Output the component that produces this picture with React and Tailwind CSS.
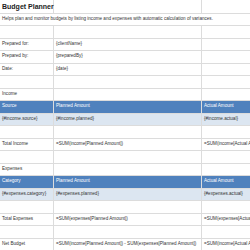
import React from "react";

// rows of the planner sheet: [label, planned, actual, kind]
const ROWS = [
  ["Prepared for:", "{clientName}", ""],
  ["Prepared by:", "{preparedBy}", ""],
  ["Date:", "{date}", ""],
  ["", "", ""],
  ["Income", "", ""],
  ["Source", "Planned Amount", "Actual Amount", "head"],
  ["{#income.source}", "{#income.planned}", "{#income.actual}", "data"],
  ["", "", ""],
  ["Total Income", "=SUM(income[Planned Amount])", "=SUM(income[Actual Amount])"],
  ["", "", ""],
  ["Expenses", "", ""],
  ["Category", "Planned Amount", "Actual Amount", "head"],
  ["{#expenses.category}", "{#expenses.planned}", "{#expenses.actual}", "data"],
  ["", "", ""],
  ["Total Expenses", "=SUM(expenses[Planned Amount])", "=SUM(expenses[Actual Amount])"],
  ["", "", ""],
  [
    "Net Budget",
    "=SUM(income[Planned Amount]) - SUM(expenses[Planned Amount])",
    "=SUM(income[Actual Amount]) - SUM(expenses[Actual Amount])",
  ],
];

const Cell = ({ children, kind }) => {
  const tone =
    kind === "head"
      ? "bg-[#4f81bd] text-white border-[#4f81bd]"
      : kind === "data"
      ? "bg-[#dce6f1] text-[#333]"
      : "bg-white text-[#333]";
  return (
    <td
      className={`h-[12.5px] border border-[#dcdcdc] px-[2px] whitespace-nowrap overflow-hidden align-middle leading-none ${tone}`}
    >
      {children}
    </td>
  );
};

const App = () => {
  return (
    <div
      className="w-[250px] h-[250px] overflow-hidden bg-white text-[4.6px]"
      style={{ fontFamily: '"Liberation Sans", Arial, sans-serif' }}
    >
      <table className="border-collapse table-fixed w-[302px] -ml-px -mt-px">
        <colgroup>
          <col className="w-[54px]" />
          <col className="w-[148px]" />
          <col className="w-[100px]" />
        </colgroup>
        <tbody>
          <tr>
            <td className="h-[13.5px] border border-[#dcdcdc] px-[2px] whitespace-nowrap overflow-visible font-bold text-[7px] text-[#222] leading-none">
              Budget Planner
            </td>
            <td className="border border-[#dcdcdc]" />
            <td className="border border-[#dcdcdc]" />
          </tr>
          <tr>
            <td
              colSpan={3}
              className="h-[12.5px] border border-[#dcdcdc] px-[2px] whitespace-nowrap text-[#333] leading-none"
            >
              Helps plan and monitor budgets by listing income and expenses with automatic calculation of variances.
            </td>
          </tr>
          <tr>
            <Cell />
            <Cell />
            <Cell />
          </tr>
          {ROWS.map(([a, b, c, kind], i) => (
            <tr key={i}>
              <Cell kind={kind}>{a}</Cell>
              <Cell kind={kind}>{b}</Cell>
              <Cell kind={kind}>{c}</Cell>
            </tr>
          ))}
        </tbody>
      </table>
    </div>
  );
};

export default App;
